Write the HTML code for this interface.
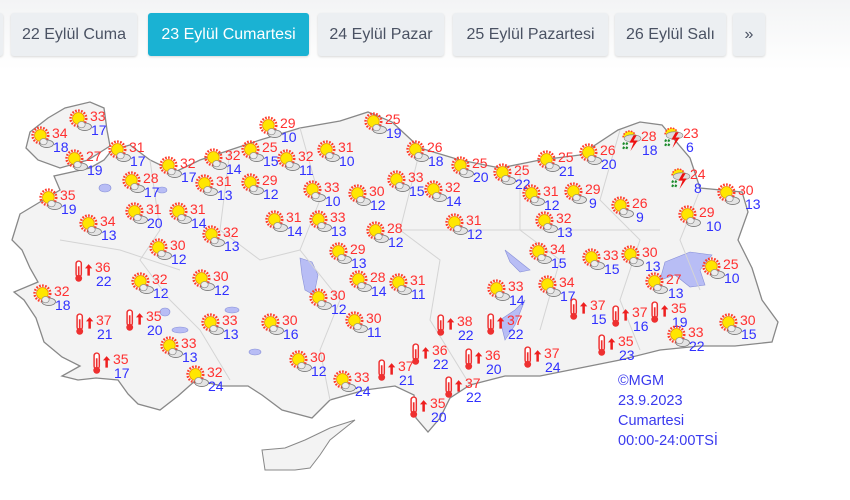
<!DOCTYPE html>
<html><head><meta charset="utf-8"><style>
body{margin:0;width:850px;height:500px;overflow:hidden;background:#fff;font-family:"Liberation Sans",sans-serif;position:relative}
.top{position:absolute;left:0;top:0;width:850px;height:70px;background:linear-gradient(#f3f4f5,#fff)}
.tab{position:absolute;top:13px;height:43px;line-height:43px;background:#eceff2;color:#4a5263;font-size:16px;text-align:center;border-radius:3px;box-shadow:0 1px 2px rgba(0,0,0,.15)}
.tab.a{background:#1ab2d3;color:#fff}
.s{position:absolute;width:50px;height:30px;font-size:14px;line-height:14px}
.s svg{position:absolute;left:-1px;top:0px;width:23px;height:23px}
.s b{position:absolute;left:20px;top:0;color:#ff3030;font-weight:normal}
.s i{position:absolute;left:21px;top:14px;color:#3030ff;font-style:normal}
.txt{position:absolute;left:618px;top:371px;color:#3a3aee;font-size:14.5px;line-height:20px}
</style></head><body>
<div class="top"></div>
<div class="tab" style="left:-20px;width:23px"></div>
<div class="tab" style="left:11px;width:126px">22 Eylül Cuma</div>
<div class="tab a" style="left:148px;width:161px">23 Eylül Cumartesi</div>
<div class="tab" style="left:318px;width:126px">24 Eylül Pazar</div>
<div class="tab" style="left:453px;width:155px">25 Eylül Pazartesi</div>
<div class="tab" style="left:615px;width:111px">26 Eylül Salı</div>
<div class="tab" style="left:733px;width:32px">»</div>

<svg style="position:absolute;left:0;top:0" width="850" height="500">
<defs>
<symbol id="sc" viewBox="0 0 22 22"><circle cx="9" cy="9" r="7.5" fill="none" stroke="#ff3b2a" stroke-width="2.4" stroke-dasharray="1.6 1.3"/><circle cx="9" cy="9" r="5.6" fill="#ffe600" stroke="#f09000" stroke-width=".8"/><ellipse cx="15" cy="17" rx="6.5" ry="3.6" fill="#e4e4e4" stroke="#777" stroke-width=".8"/><ellipse cx="12" cy="15" rx="3.5" ry="3" fill="#eee" stroke="#888" stroke-width=".6"/></symbol>
<symbol id="st" viewBox="0 0 22 22"><path d="M3 8a6 6 0 0 1 12 0" fill="#ffe600" stroke="#ff3b2a" stroke-width="1.5" stroke-dasharray="1.5 1.2"/><ellipse cx="12" cy="9" rx="8" ry="3.5" fill="#ddd" stroke="#888" stroke-width=".6"/><path d="M13 6l-4 7h4l-3 8 7-10h-4l3-5z" fill="#ee1111"/><path d="M4 13l-1 2M7 13l-1 2M4 17l-1 2M7 17l-1 2" stroke="#1a8a2a" stroke-width="2"/></symbol>
<symbol id="th" viewBox="0 0 22 22"><rect x="2" y="1" width="5" height="15" rx="2.5" fill="#fff" stroke="#ee3030" stroke-width="1.4"/><circle cx="4.5" cy="17.5" r="3.3" fill="#ee3030"/><rect x="3.7" y="6" width="1.6" height="10" fill="#ee3030"/><path d="M14 4l-3.5 4h2.3v7h2.4V8h2.3z" fill="#ee2020"/></symbol>
</defs>
<path d="M30 132L48 118 65 108 90 102 104 108 107 130 110 146 88 160 60 168 38 160 26 148Z" fill="#f3f3f3" stroke="#888" stroke-width="1.3"/>
<path d="M112 150L130 145 150 160 175 172 200 160 230 150 260 140 300 128 340 121 368 112 392 122 420 148 460 160 500 168 540 160 580 155 618 130 640 122 662 125 690 158 700 188 742 192 748 212 738 240 752 268 762 300 778 322 772 342 735 346 700 346 660 350 620 360 580 368 540 376 505 376 470 385 450 398 440 418 428 432 416 418 414 395 395 386 365 390 330 400 312 418 282 410 262 395 248 386 222 386 196 380 178 396 160 410 138 404 128 394 118 380 96 378 78 380 62 376 80 366 62 357 44 342 36 318 24 300 14 292 38 282 30 268 22 250 12 240 20 214 40 202 60 190 54 176 90 168 104 160Z" fill="#f3f3f3" stroke="#888" stroke-width="1.3"/>
<path d="M262 450L285 448 305 440 330 428 355 420 330 440 320 455 310 468 295 470 280 470 265 470Z" fill="#f3f3f3" stroke="#888" stroke-width="1"/>
<g fill="#b8bdf5" stroke="#8890d8" stroke-width=".6">
<path d="M665 262L690 252 712 255 700 270 705 285 690 287 675 275 660 280Z"/>
<path d="M300 258L312 262 318 275 314 295 305 290 302 275Z"/>
<path d="M505 250L520 262 530 270 520 272 510 262Z"/>
<path d="M500 320L515 310 525 300 515 325 505 340Z"/>
<ellipse cx="232" cy="310" rx="7" ry="3"/><ellipse cx="180" cy="330" rx="8" ry="3"/><ellipse cx="165" cy="312" rx="5" ry="4"/><ellipse cx="255" cy="352" rx="6" ry="3"/>
<ellipse cx="105" cy="188" rx="6" ry="4"/><ellipse cx="162" cy="190" rx="5" ry="3"/>
</g>
<g fill="none" stroke="#d4d4d4" stroke-width="1">
<path d="M150 160L160 230 140 260 170 300 200 330 230 380M230 150L220 230 260 260 300 250M300 128L320 200 300 250 340 300 320 350 330 400M420 150L400 230 440 260 430 320 470 385M520 168L520 230 560 260 540 330M620 130L600 200 640 240 620 300 640 350M700 190L680 240 700 290M60 240L120 250 180 270M400 230L480 230 560 230 660 230"/>
</g>
</svg>

<div class="s" style="left:32px;top:126px"><svg><use href="#sc"/></svg><b>34</b><i>18</i></div>
<div class="s" style="left:70px;top:109px"><svg><use href="#sc"/></svg><b>33</b><i>17</i></div>
<div class="s" style="left:66px;top:149px"><svg><use href="#sc"/></svg><b>27</b><i>19</i></div>
<div class="s" style="left:109px;top:140px"><svg><use href="#sc"/></svg><b>31</b><i>17</i></div>
<div class="s" style="left:123px;top:171px"><svg><use href="#sc"/></svg><b>28</b><i>17</i></div>
<div class="s" style="left:160px;top:156px"><svg><use href="#sc"/></svg><b>32</b><i>17</i></div>
<div class="s" style="left:40px;top:188px"><svg><use href="#sc"/></svg><b>35</b><i>19</i></div>
<div class="s" style="left:126px;top:202px"><svg><use href="#sc"/></svg><b>31</b><i>20</i></div>
<div class="s" style="left:170px;top:202px"><svg><use href="#sc"/></svg><b>31</b><i>14</i></div>
<div class="s" style="left:80px;top:214px"><svg><use href="#sc"/></svg><b>34</b><i>13</i></div>
<div class="s" style="left:150px;top:238px"><svg><use href="#sc"/></svg><b>30</b><i>12</i></div>
<div class="s" style="left:203px;top:225px"><svg><use href="#sc"/></svg><b>32</b><i>13</i></div>
<div class="s" style="left:205px;top:148px"><svg><use href="#sc"/></svg><b>32</b><i>14</i></div>
<div class="s" style="left:260px;top:116px"><svg><use href="#sc"/></svg><b>29</b><i>10</i></div>
<div class="s" style="left:242px;top:140px"><svg><use href="#sc"/></svg><b>25</b><i>15</i></div>
<div class="s" style="left:278px;top:149px"><svg><use href="#sc"/></svg><b>32</b><i>11</i></div>
<div class="s" style="left:318px;top:140px"><svg><use href="#sc"/></svg><b>31</b><i>10</i></div>
<div class="s" style="left:365px;top:112px"><svg><use href="#sc"/></svg><b>25</b><i>19</i></div>
<div class="s" style="left:242px;top:173px"><svg><use href="#sc"/></svg><b>29</b><i>12</i></div>
<div class="s" style="left:196px;top:174px"><svg><use href="#sc"/></svg><b>31</b><i>13</i></div>
<div class="s" style="left:304px;top:180px"><svg><use href="#sc"/></svg><b>33</b><i>10</i></div>
<div class="s" style="left:349px;top:184px"><svg><use href="#sc"/></svg><b>30</b><i>12</i></div>
<div class="s" style="left:388px;top:170px"><svg><use href="#sc"/></svg><b>33</b><i>15</i></div>
<div class="s" style="left:407px;top:140px"><svg><use href="#sc"/></svg><b>26</b><i>18</i></div>
<div class="s" style="left:425px;top:180px"><svg><use href="#sc"/></svg><b>32</b><i>14</i></div>
<div class="s" style="left:452px;top:156px"><svg><use href="#sc"/></svg><b>25</b><i>20</i></div>
<div class="s" style="left:494px;top:163px"><svg><use href="#sc"/></svg><b>25</b><i>22</i></div>
<div class="s" style="left:538px;top:150px"><svg><use href="#sc"/></svg><b>25</b><i>21</i></div>
<div class="s" style="left:580px;top:143px"><svg><use href="#sc"/></svg><b>26</b><i>20</i></div>
<div class="s" style="left:621px;top:129px"><svg><use href="#st"/></svg><b>28</b><i>18</i></div>
<div class="s" style="left:663px;top:126px"><svg><use href="#st"/></svg><b>23</b><i style="left:23px">6</i></div>
<div class="s" style="left:670px;top:167px"><svg><use href="#st"/></svg><b>24</b><i style="left:24px">8</i></div>
<div class="s" style="left:523px;top:184px"><svg><use href="#sc"/></svg><b>31</b><i>12</i></div>
<div class="s" style="left:565px;top:182px"><svg><use href="#sc"/></svg><b>29</b><i style="left:24px">9</i></div>
<div class="s" style="left:612px;top:196px"><svg><use href="#sc"/></svg><b>26</b><i style="left:24px">9</i></div>
<div class="s" style="left:718px;top:183px"><svg><use href="#sc"/></svg><b>30</b><i style="left:27px">13</i></div>
<div class="s" style="left:679px;top:205px"><svg><use href="#sc"/></svg><b>29</b><i style="left:27px">10</i></div>
<div class="s" style="left:536px;top:211px"><svg><use href="#sc"/></svg><b>32</b><i>13</i></div>
<div class="s" style="left:446px;top:213px"><svg><use href="#sc"/></svg><b>31</b><i>12</i></div>
<div class="s" style="left:310px;top:210px"><svg><use href="#sc"/></svg><b>33</b><i>13</i></div>
<div class="s" style="left:266px;top:210px"><svg><use href="#sc"/></svg><b>31</b><i>14</i></div>
<div class="s" style="left:367px;top:221px"><svg><use href="#sc"/></svg><b>28</b><i>12</i></div>
<div class="s" style="left:330px;top:242px"><svg><use href="#sc"/></svg><b>29</b><i>13</i></div>
<div class="s" style="left:530px;top:242px"><svg><use href="#sc"/></svg><b>34</b><i>15</i></div>
<div class="s" style="left:583px;top:248px"><svg><use href="#sc"/></svg><b>33</b><i>15</i></div>
<div class="s" style="left:622px;top:245px"><svg><use href="#sc"/></svg><b>30</b><i style="left:23px">13</i></div>
<div class="s" style="left:646px;top:272px"><svg><use href="#sc"/></svg><b>27</b><i style="left:22px">13</i></div>
<div class="s" style="left:703px;top:257px"><svg><use href="#sc"/></svg><b>25</b><i>10</i></div>
<div class="s" style="left:539px;top:275px"><svg><use href="#sc"/></svg><b>34</b><i>17</i></div>
<div class="s" style="left:488px;top:279px"><svg><use href="#sc"/></svg><b>33</b><i>14</i></div>
<div class="s" style="left:75px;top:260px"><svg><use href="#th"/></svg><b>36</b><i>22</i></div>
<div class="s" style="left:132px;top:272px"><svg><use href="#sc"/></svg><b>32</b><i>12</i></div>
<div class="s" style="left:193px;top:269px"><svg><use href="#sc"/></svg><b>30</b><i>12</i></div>
<div class="s" style="left:34px;top:284px"><svg><use href="#sc"/></svg><b>32</b><i>18</i></div>
<div class="s" style="left:350px;top:270px"><svg><use href="#sc"/></svg><b>28</b><i>14</i></div>
<div class="s" style="left:390px;top:273px"><svg><use href="#sc"/></svg><b>31</b><i>11</i></div>
<div class="s" style="left:310px;top:288px"><svg><use href="#sc"/></svg><b>30</b><i>12</i></div>
<div class="s" style="left:346px;top:311px"><svg><use href="#sc"/></svg><b>30</b><i>11</i></div>
<div class="s" style="left:76px;top:313px"><svg><use href="#th"/></svg><b>37</b><i>21</i></div>
<div class="s" style="left:126px;top:309px"><svg><use href="#th"/></svg><b>35</b><i>20</i></div>
<div class="s" style="left:202px;top:313px"><svg><use href="#sc"/></svg><b>33</b><i>13</i></div>
<div class="s" style="left:262px;top:313px"><svg><use href="#sc"/></svg><b>30</b><i>16</i></div>
<div class="s" style="left:161px;top:336px"><svg><use href="#sc"/></svg><b>33</b><i>13</i></div>
<div class="s" style="left:93px;top:352px"><svg><use href="#th"/></svg><b>35</b><i>17</i></div>
<div class="s" style="left:187px;top:365px"><svg><use href="#sc"/></svg><b>32</b><i>24</i></div>
<div class="s" style="left:290px;top:350px"><svg><use href="#sc"/></svg><b>30</b><i>12</i></div>
<div class="s" style="left:334px;top:370px"><svg><use href="#sc"/></svg><b>33</b><i>24</i></div>
<div class="s" style="left:378px;top:359px"><svg><use href="#th"/></svg><b>37</b><i>21</i></div>
<div class="s" style="left:437px;top:314px"><svg><use href="#th"/></svg><b>38</b><i>22</i></div>
<div class="s" style="left:412px;top:343px"><svg><use href="#th"/></svg><b>36</b><i>22</i></div>
<div class="s" style="left:465px;top:348px"><svg><use href="#th"/></svg><b>36</b><i>20</i></div>
<div class="s" style="left:487px;top:313px"><svg><use href="#th"/></svg><b>37</b><i>22</i></div>
<div class="s" style="left:524px;top:346px"><svg><use href="#th"/></svg><b>37</b><i>24</i></div>
<div class="s" style="left:445px;top:376px"><svg><use href="#th"/></svg><b>37</b><i>22</i></div>
<div class="s" style="left:410px;top:396px"><svg><use href="#th"/></svg><b>35</b><i>20</i></div>
<div class="s" style="left:570px;top:298px"><svg><use href="#th"/></svg><b>37</b><i>15</i></div>
<div class="s" style="left:612px;top:305px"><svg><use href="#th"/></svg><b>37</b><i>16</i></div>
<div class="s" style="left:651px;top:301px"><svg><use href="#th"/></svg><b>35</b><i>19</i></div>
<div class="s" style="left:598px;top:334px"><svg><use href="#th"/></svg><b>35</b><i>23</i></div>
<div class="s" style="left:668px;top:325px"><svg><use href="#sc"/></svg><b>33</b><i>22</i></div>
<div class="s" style="left:720px;top:313px"><svg><use href="#sc"/></svg><b>30</b><i>15</i></div>

<div class="txt">©MGM<br>23.9.2023<br>Cumartesi<br>00:00-24:00TSİ</div>
</body></html>
